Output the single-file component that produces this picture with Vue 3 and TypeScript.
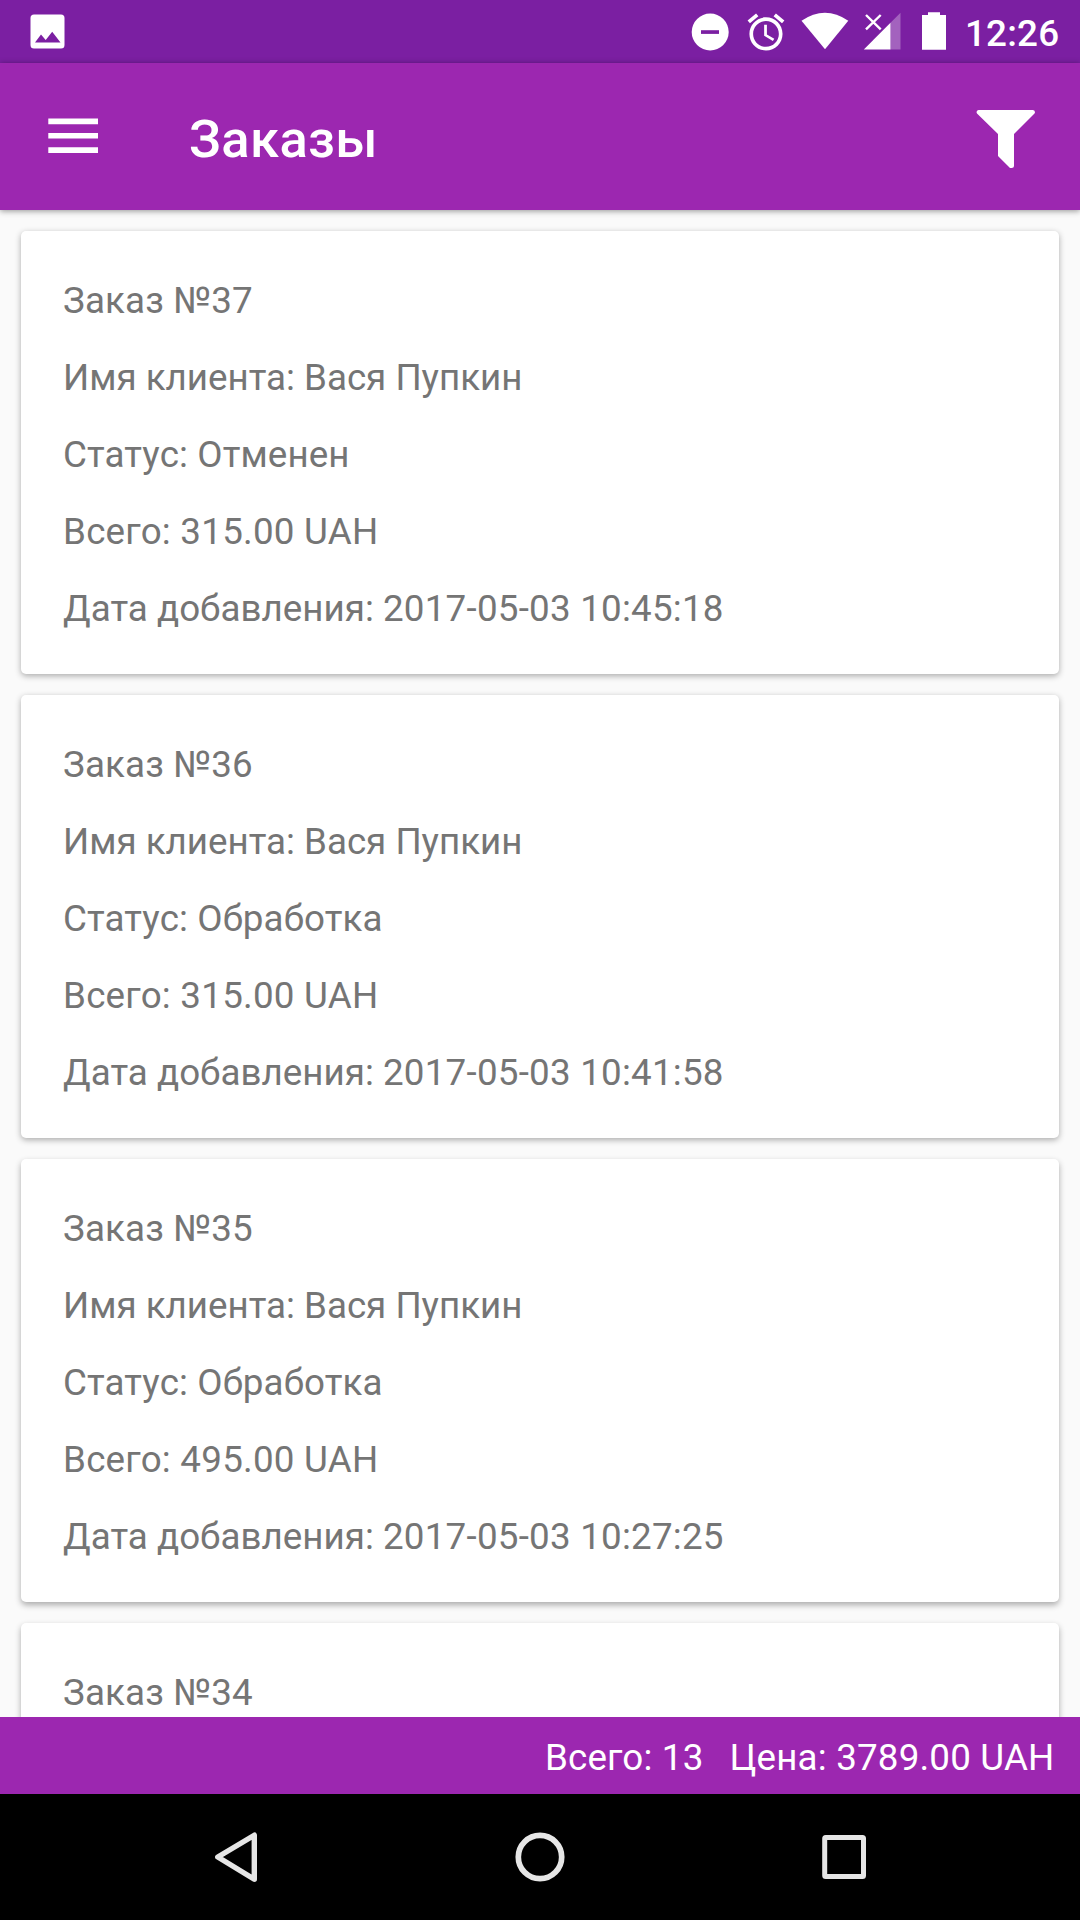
<script setup lang="ts">
interface Order {
  id: number
  client: string
  status: string
  total: string
  added: string
}

const orders: Order[] = [
  { id: 37, client: 'Вася Пупкин', status: 'Отменен', total: '315.00 UAH', added: '2017-05-03 10:45:18' },
  { id: 36, client: 'Вася Пупкин', status: 'Обработка', total: '315.00 UAH', added: '2017-05-03 10:41:58' },
  { id: 35, client: 'Вася Пупкин', status: 'Обработка', total: '495.00 UAH', added: '2017-05-03 10:27:25' },
]
const nextOrderId = 34
</script>

<template>
  <div class="screen">
    <header class="status-bar">
      <svg class="picture" width="36" height="63" viewBox="29 0 36 63">
        <path fill="#fff" fill-rule="evenodd" d="M34 14.5H61Q64.500 14.500 64.500 18V45Q64.500 48.500 61 48.500H34Q30.500 48.500 30.500 45V18Q30.500 14.500 34 14.500ZM35 42.500H60.500L52.200 31.700L45.700 40L41 34.500Z" />
      </svg>
      <div class="indicators">
        <svg width="54" height="63" viewBox="687 0 54 63">
          <circle cx="710.200" cy="32" r="18.500" fill="#fff" />
          <path d="M701 30.200h18v3.700h-18z" fill="#7b1fa2" />
        </svg>
        <svg width="55" height="63" viewBox="741 0 55 63">
          <path fill="#fff" transform="translate(743.900 10) scale(1.84)" d="M22 5.720l-4.600-3.860-1.290 1.530 4.600 3.860L22 5.720zM7.880 3.390L6.600 1.860 2 5.710l1.290 1.530 4.590-3.850zM12.500 8H11v6l4.750 2.850.75-1.230-4-2.370V8zM12 4c-4.970 0-9 4.030-9 9s4.020 9 9 9c4.970 0 9-4.030 9-9s-4.030-9-9-9zm0 16c-3.870 0-7-3.130-7-7s3.130-7 7-7 7 3.130 7 7-3.130 7-7 7z" />
        </svg>
        <svg width="60" height="63" viewBox="796 0 60 63">
          <path fill="#fff" d="M825 49.200L801.500 20.700Q825 4.700 848.300 20.700Z" />
        </svg>
        <svg width="56" height="63" viewBox="856 0 56 63">
          <path fill="#fff" d="M863.800 49.400L890.500 22.700V49.400Z" />
          <path fill="#fff" fill-opacity=".3" d="M890.500 22.700L900.500 12.700V49.400H890.500Z" />
          <path stroke="#fff" stroke-width="2.400" d="M866 15L880.700 29.400M880.700 15L866 29.400" />
        </svg>
        <svg width="53" height="63" viewBox="912 0 53 63">
          <path fill="#fff" d="M928 12.300H940V15H946V49.800H922V15H928Z" />
        </svg>
        <span class="clock">12:26</span>
      </div>
    </header>

    <div class="app-bar">
      <svg class="menu" width="50" height="147" viewBox="48 63 50 147">
        <path fill="#fff" d="M48.300 118.400H98V124.300H48.300ZM48.300 132.900H98V138.600H48.300ZM48.300 147.200H98V153H48.300Z" />
      </svg>
      <h1>Заказы</h1>
      <svg class="filter" width="60" height="147" viewBox="976 63 60 147">
        <path fill="#fff" d="M978.500 110H1033Q1035 110.200 1035 112.500L1034.500 113.500L1014 134V165.500Q1014 168 1011.500 168H1010L998 156V134L977 113.500L976.500 112.300Q976.500 110.200 978.500 110Z" />
      </svg>
    </div>

    <main class="orders">
      <article v-for="order in orders" :key="order.id" class="card">
        <p class="number">Заказ №{{ order.id }}</p>
        <p class="client">Имя клиента: {{ order.client }}</p>
        <p class="status">Статус: {{ order.status }}</p>
        <p class="total">Всего: {{ order.total }}</p>
        <p>Дата добавления: <span class="date">{{ order.added }}</span></p>
      </article>
      <article class="card">
        <p class="number">Заказ №{{ nextOrderId }}</p>
      </article>
    </main>

    <footer class="summary">
      <span>Всего: 13</span>
      <span>Цена: 3789.00 UAH</span>
    </footer>

    <nav class="nav-bar">
      <svg width="304" height="126" viewBox="84 1794 304 126">
        <path d="M217.800 1857L254.300 1835.200V1879.200Z" fill="none" stroke="#e6e6e6" stroke-width="5.400" stroke-linejoin="round" />
      </svg>
      <svg width="304" height="126" viewBox="388 1794 304 126">
        <circle cx="540" cy="1857" r="21.700" fill="none" stroke="#e6e6e6" stroke-width="5.700" />
      </svg>
      <svg width="304" height="126" viewBox="692 1794 304 126">
        <rect x="824.700" y="1837.500" width="38.800" height="39" rx="1" fill="none" stroke="#e6e6e6" stroke-width="5" stroke-linejoin="round" />
      </svg>
    </nav>
  </div>
</template>

<style>
body {
  margin: 0;
}
</style>

<style scoped>
.screen {
  display: flex;
  flex-direction: column;
  width: 1080px;
  height: 1920px;
  overflow: hidden;
  background: #fafafa;
  font-family: Roboto, "Noto Sans", sans-serif;
  font-size: 36.75px;
}

svg {
  display: block;
  flex: none;
}

.status-bar {
  display: flex;
  flex: none;
  justify-content: space-between;
  height: 63px;
  padding: 0 21px 0 29px;
  background: #7b1fa2;
}

.indicators {
  display: flex;
}

.clock {
  width: 94px;
  color: #fff;
  font-weight: 500;
  letter-spacing: 0.2px;
  line-height: 67px;
  white-space: nowrap;
}

.app-bar {
  position: relative;
  z-index: 1;
  display: flex;
  flex: none;
  align-items: center;
  height: 147px;
  padding: 0 44px 0 48px;
  background: #9c27b0;
  box-shadow: 0 1px 6px rgba(0, 0, 0, 0.42);
}

h1 {
  flex: 1;
  margin: 0;
  padding: 4px 0 0 91px;
  color: #fff;
  font-size: 52.5px;
  font-weight: 500;
  letter-spacing: 0.4px;
  line-height: 62px;
}

.orders {
  display: flex;
  flex: 1;
  flex-direction: column;
  gap: 21px;
  min-height: 0;
  padding: 21px 21px 0;
  overflow: hidden;
}

.card {
  flex: none;
  box-sizing: border-box;
  height: 443px;
  padding: 31px 42px 27px;
  border-radius: 5px;
  background: #fff;
  box-shadow: 0 2px 6px rgba(0, 0, 0, 0.32);
  color: #757575;
}

.card:nth-child(n + 3) {
  box-shadow: 0 3px 6px rgba(0, 0, 0, 0.32);
}

p {
  margin: 0;
  letter-spacing: 0.02px;
  line-height: 77px;
  white-space: pre;
}

.number {
  letter-spacing: 0.13px;
}

.client {
  letter-spacing: -0.01px;
}

.status {
  letter-spacing: 0.12px;
}

.total {
  letter-spacing: 0.24px;
}

.date {
  letter-spacing: 0.23px;
}

.summary {
  display: flex;
  flex: none;
  gap: 26px;
  justify-content: flex-end;
  box-sizing: border-box;
  height: 77px;
  padding: 2px 25.5px 0 0;
  background: #9c27b0;
  color: #fff;
  letter-spacing: 0.18px;
  line-height: 77px;
  white-space: nowrap;
}

.nav-bar {
  display: flex;
  flex: none;
  justify-content: center;
  height: 126px;
  background: #000;
}
</style>
